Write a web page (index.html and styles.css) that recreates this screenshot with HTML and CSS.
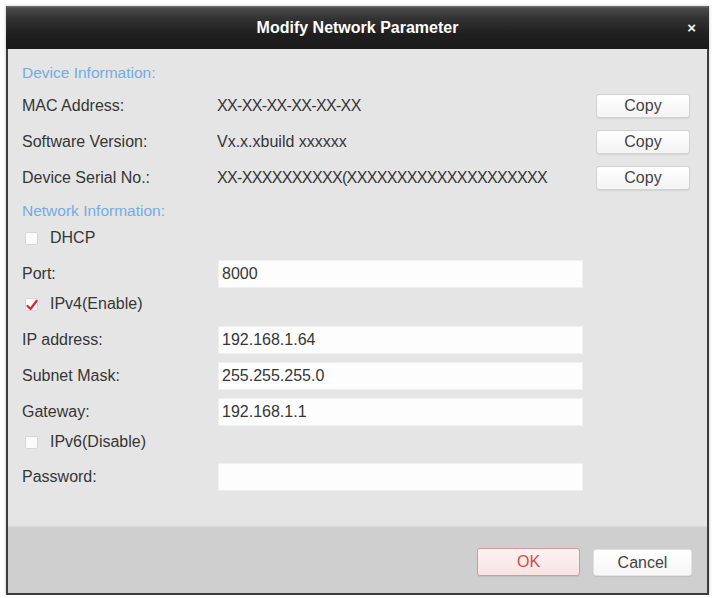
FILE: index.html
```html
<!DOCTYPE html>
<html>
<head>
<meta charset="utf-8">
<title>Modify Network Parameter</title>
<link rel="stylesheet" href="styles.css">
</head>
<body>
<div class="dialog">
  <div class="titlebar">
    <span></span>
    <span class="title">Modify Network Parameter</span>
    <span class="close">&#215;</span>
  </div>
  <div class="content">
    <div class="section first">Device Information:</div>
    <div class="row info">
      <span class="label">MAC Address:</span>
      <span class="value xs">XX-XX-XX-XX-XX-XX</span>
      <button class="btn copy">Copy</button>
    </div>
    <div class="row info">
      <span class="label">Software Version:</span>
      <span class="value">Vx.x.xbuild xxxxxx</span>
      <button class="btn copy">Copy</button>
    </div>
    <div class="row info">
      <span class="label">Device Serial No.:</span>
      <span class="value xs">XX-XXXXXXXXXX(XXXXXXXXXXXXXXXXXXXX</span>
      <button class="btn copy">Copy</button>
    </div>
    <div class="section">Network Information:</div>
    <div class="row check">
      <span class="cb"></span>
      <span>DHCP</span>
    </div>
    <div class="row field gap6">
      <span class="label">Port:</span>
      <input class="text-input" type="text" value="8000">
    </div>
    <div class="row check">
      <span class="cb checked"><svg viewBox="0 0 14 14" width="14" height="14"><path d="M2.5 8 L5.5 11 L11.5 3" fill="none" stroke="#d3283a" stroke-width="2.2" stroke-linecap="round" stroke-linejoin="round"/></svg></span>
      <span>IPv4(Enable)</span>
    </div>
    <div class="row field gap6">
      <span class="label">IP address:</span>
      <input class="text-input" type="text" value="192.168.1.64">
    </div>
    <div class="row field">
      <span class="label">Subnet Mask:</span>
      <input class="text-input" type="text" value="255.255.255.0">
    </div>
    <div class="row field">
      <span class="label">Gateway:</span>
      <input class="text-input" type="text" value="192.168.1.1">
    </div>
    <div class="row check">
      <span class="cb"></span>
      <span>IPv6(Disable)</span>
    </div>
    <div class="row field gap5">
      <span class="label">Password:</span>
      <input class="text-input" type="password" value="">
    </div>
  </div>
  <div class="footer">
    <button class="btn ok">OK</button>
    <button class="btn cancel">Cancel</button>
  </div>
</div>
</body>
</html>
```

FILE: styles.css
```css
html, body {
  margin: 0;
  padding: 0;
  background: #ffffff;
}

body {
  font-family: "Liberation Sans", Arial, sans-serif;
  font-size: 16px;
  color: #363636;
}

.dialog {
  margin: 6px 0 0 6px;
  width: 703px;
  height: 589px;
  box-sizing: border-box;
  border: 2px solid #3c3c3c;
  border-top: 0;
  display: flex;
  flex-direction: column;
  background: #e5e5e5;
  box-shadow: 0 0 3px rgba(0, 0, 0, 0.25);
}

.titlebar {
  height: 43px;
  flex: none;
  margin: 0 -2px;
  display: grid;
  grid-template-columns: 40px 1fr 40px;
  align-items: center;
  background: linear-gradient(#7a7a7a 0px, #4a4a4a 2px, #333333 12px, #1f1f1f 28px, #1a1a1a 43px);
  border-radius: 2px 2px 0 0;
}

.title {
  text-align: center;
  color: #ffffff;
  font-weight: bold;
  font-size: 16px;
  padding-top: 1px;
}

.close {
  justify-self: end;
  margin-right: 13px;
  color: #f2f2f2;
  font-weight: bold;
  font-size: 15px;
  line-height: 1;
}

.content {
  flex: 1;
  padding: 0 0 0 14px;
  display: flex;
  flex-direction: column;
}

.section {
  height: 30px;
  display: flex;
  align-items: center;
  color: #74ace0;
  font-size: 15.5px;
}

.section.first {
  margin-top: 9px;
}

.row {
  display: flex;
  align-items: center;
}

.row.info,
.row.field {
  height: 36px;
}

.row.check {
  height: 24px;
}

.gap6 { margin-top: 6px; }
.gap5 { margin-top: 5px; }

.label {
  width: 195px;
  flex: none;
}

.value {
  flex: 1;
  white-space: nowrap;
}

.value.xs {
  letter-spacing: -0.65px;
}

.btn {
  font-family: "Liberation Sans", Arial, sans-serif;
  font-size: 16px;
  color: #444444;
  box-sizing: border-box;
  border: 1px solid #d2d2d2;
  border-radius: 3px;
  background: linear-gradient(#ffffff, #f3f3f3);
  box-shadow: 0 1px 1px rgba(0, 0, 0, 0.08);
  padding: 0;
  cursor: pointer;
}

.copy {
  width: 94px;
  height: 24px;
  margin-right: 17px;
  flex: none;
}

.cb {
  width: 13px;
  height: 13px;
  margin: 0 12px 0 3px;
  box-sizing: border-box;
  background: #fbfbfb;
  border: 1px solid #d6d6d6;
  border-radius: 2px;
  display: inline-flex;
  align-items: center;
  justify-content: center;
  overflow: visible;
}

.cb svg {
  flex: none;
  margin-top: 1px;
}

.text-input {
  box-sizing: border-box;
  width: 365px;
  height: 28px;
  margin: 0 0 0 1px;
  padding: 0 0 0 3px;
  border: 1px solid #f0f0f0;
  background: #fdfdfd;
  font-family: "Liberation Sans", Arial, sans-serif;
  font-size: 16px;
  color: #363636;
  outline: none;
}

.footer {
  flex: none;
  height: 67px;
  box-sizing: border-box;
  background: #cfcfcf;
  border-top: 1px solid #d8d8d8;
  display: flex;
  justify-content: flex-end;
  align-items: flex-start;
  gap: 13px;
  padding: 21px 15px 0 0;
}

.ok {
  width: 103px;
  height: 28px;
  color: #d24a4a;
  border-color: #d49a9a;
  background: linear-gradient(#fdf1f1, #f7e4e4);
}

.cancel {
  width: 99px;
  height: 27px;
  margin-top: 1px;
  border-color: #e2e2e2;
  background: linear-gradient(#ffffff, #f6f6f6);
}
```
